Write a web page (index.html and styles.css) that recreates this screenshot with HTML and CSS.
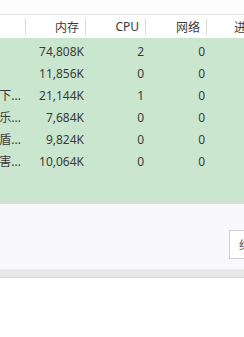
FILE: index.html
```html
<!DOCTYPE html>
<html>
<head>
<meta charset="utf-8">
<link rel="stylesheet" href="styles.css">
</head>
<body>
<div class="top"></div>
<div class="header">
  <div class="c name"></div>
  <div class="c mem">内存</div>
  <div class="c cpu">CPU</div>
  <div class="c net">网络</div>
  <div class="c more">进</div>
</div>
<div class="body">
  <div class="row"><div class="c name"><span></span></div><div class="c mem">74,808K</div><div class="c cpu">2</div><div class="c net">0</div></div>
  <div class="row"><div class="c name"><span></span></div><div class="c mem">11,856K</div><div class="c cpu">0</div><div class="c net">0</div></div>
  <div class="row"><div class="c name"><span>迅雷下...</span></div><div class="c mem">21,144K</div><div class="c cpu">1</div><div class="c net">0</div></div>
  <div class="row"><div class="c name"><span>酷狗音乐...</span></div><div class="c mem">7,684K</div><div class="c cpu">0</div><div class="c net">0</div></div>
  <div class="row"><div class="c name"><span>安全卫盾...</span></div><div class="c mem">9,824K</div><div class="c cpu">0</div><div class="c net">0</div></div>
  <div class="row"><div class="c name"><span>软件管害...</span></div><div class="c mem">10,064K</div><div class="c cpu">0</div><div class="c net">0</div></div>
</div>
<div class="footer">
  <button class="btn">结束任务</button>
</div>
<div class="bottom"></div>
</body>
</html>
```
FILE: styles.css
```css
html, body {
  margin: 0;
  padding: 0;
  background: #ffffff;
  width: 244px;
  height: 337px;
  overflow: hidden;
  font-family: "Noto Sans", "Noto Sans CJK SC", sans-serif;
  font-size: 12px;
  color: #3a3a3a;
}
.top {
  height: 14px;
  background: #fdfdfd;
  border-bottom: 1px solid #e4e4e4;
}
.header {
  display: flex;
  height: 23px;
  background: #fff;
  align-items: stretch;
}
.header .c {
  display: flex;
  align-items: center;
  justify-content: flex-end;
  padding-right: 7px;
  position: relative;
}
.header .c::after {
  content: "";
  position: absolute;
  right: 0;
  top: 3px;
  bottom: 3px;
  width: 1px;
  background: #dcdcdc;
}
.header .more::after { display: none; }
.header .more { justify-content: flex-start; padding-left: 27px; }
.c { box-sizing: border-box; flex: none; white-space: nowrap; }
.name { width: 26px; }
.mem { width: 60px; }
.cpu { width: 60px; }
.net { width: 61px; }
.more { width: 60px; }
.body {
  background: #cbe6cf;
  height: 166px;
  padding-top: 2px;
  box-sizing: border-box;
  border-bottom: 2px solid #dcdcd8;
}
.row {
  display: flex;
  height: 22px;
  align-items: center;
}
.row .c {
  display: flex;
  justify-content: flex-end;
  padding-right: 2px;
}
.row .name {
  overflow: hidden;
  padding-right: 5px;
}
.row .name span { flex: none; }
.footer {
  height: 66px;
  background: #f9f8fc;
  display: flex;
  align-items: flex-start;
  border-bottom: 1px solid #ececec;
  box-sizing: border-box;
}
.btn {
  margin: 26px 0 0 229px;
  height: 29px;
  width: 80px;
  flex: none;
  background: #fff;
  border: 1px solid #d0d0d0;
  font-family: inherit;
  font-size: 12px;
  color: #555;
  text-align: left;
  padding: 0 0 0 9px;
}
.bottom {
  height: 7px;
  background: #e8e8e8;
  border-bottom: 1px solid #d8d8d8;
}
```
